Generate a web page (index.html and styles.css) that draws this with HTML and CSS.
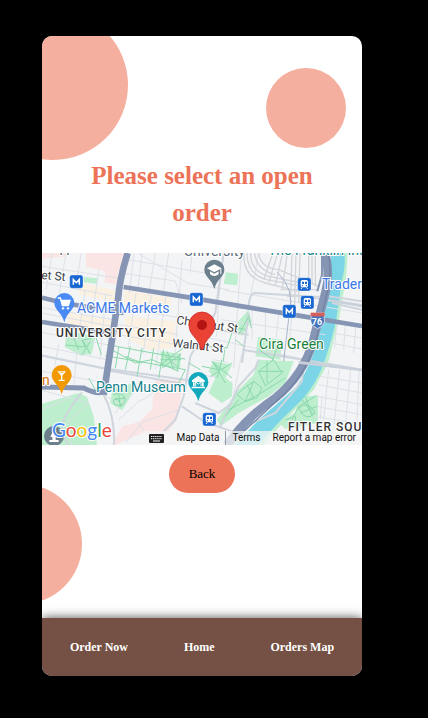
FILE: index.html
```html
<!DOCTYPE html>
<html lang="en">
<head>
<meta charset="utf-8">
<meta name="viewport" content="width=device-width, initial-scale=1">
<title>Select an open order</title>
<link rel="stylesheet" href="styles.css">
</head>
<body>
<div class="app">
  <span class="bubble bubble-large"></span>
  <span class="bubble bubble-small"></span>
  <span class="bubble bubble-low"></span>
  <main class="content">
    <h1 class="title">Please select an open order</h1>
    <section class="map" aria-label="Map">
      <svg class="map-canvas" viewBox="0 0 320 192" preserveAspectRatio="xMidYMid slice">
        <defs>
          <path id="pin" d="M0-30A30 30 0 0 0-30 0C-30 22-8 26 0 58C8 26 30 22 30 0A30 30 0 0 0 0-30Z"/>
          <g id="metro"><rect x="-20" y="-20" width="40" height="40" rx="7" fill="#1967d2" stroke="#fff" stroke-width="1"/><path d="M-9 9V-7L0 3L9-7V9" fill="none" stroke="#fff" stroke-width="4.5"/></g>
          <g id="train"><rect x="-20" y="-20" width="40" height="40" rx="7" fill="#1967d2" stroke="#fff" stroke-width="1"/><rect x="-11" y="-13" width="22" height="22" rx="5" fill="#fff"/><path d="M-7-8H-1V-1H-7ZM2-8H8V-1H2Z" fill="#1967d2"/><circle cx="-6" cy="4" r="2" fill="#1967d2"/><circle cx="6" cy="4" r="2" fill="#1967d2"/><path d="M-6 9L-10 14M6 9L10 14" stroke="#fff" stroke-width="3"/></g>
        </defs>
        <rect width="320" height="192" fill="#f3f4f6"/>
        <svg width="320" height="192" viewBox="0 0 960 576">
          <!-- land use -->
          <g fill="#fbe4e4">
            <path d="M132 0H250L228 60L224 95L188 88L190 55L132 42Z"/>
            <path d="M340 378L425 382L405 500L368 550L300 540L220 576H210L240 520L290 508L330 470Z"/>
            <path d="M0 0H70V10L0 18Z"/>
          </g>
          <g fill="#fbf1e2">
            <path d="M105 88L220 112L214 145L110 125ZM250 112L390 135L380 175L245 150ZM75 178L220 205L215 245L80 225ZM250 190L400 205L395 285L320 290L245 250Z"/>
          </g>
          <g fill="#bdeecd">
            <path d="M75 232L160 250L150 300L118 308L68 282ZM125 72L165 76V92L125 88ZM552 58L588 62L586 97L545 93Z"/>
            <path d="M0 452L110 420L135 432L155 490L165 576H0Z"/>
            <path d="M212 404L270 392L282 405L240 472L205 450ZM355 295L415 302V345L360 340ZM515 325L570 335L550 375L572 390L570 430L540 450L500 420L520 375L500 355Z"/>
            <path d="M648 320L755 325L730 390L680 430L590 480L535 520L525 500L590 410L635 365Z"/>
            <path d="M648 252L720 260L715 320L640 310ZM620 170L628 205L600 250L575 220Z"/>
            <path d="M775 432L828 426V510L730 527L712 510L760 478Z"/>
          </g>
          <!-- river and its bank -->
          <path d="M892 0H917L912 75L890 205L858 330L815 410L730 500L665 576H560L690 480L790 395L840 310L870 190Z" fill="#bdeecd"/>
          <path d="M868 0H906Q913 30 900 80L882 205Q865 280 840 344Q820 395 780 440L720 498L648 576H580L650 500L760 405Q815 330 834 230L860 130Z" fill="#7bd5e7"/>
          <!-- minor streets -->
          <g fill="none" stroke="#dde1e7" stroke-width="3">
            <path d="M0 40L228 75M0 88L210 128M0 164L215 200M0 180L208 220M0 238L200 276M0 280L195 320M0 305L188 345M0 355L184 388M30 0L12 110M72 0L52 120M118 0L102 95M130 110L112 230M170 52L148 214M192 120L174 320M50 275L38 340M105 290L95 405"/>
            <path d="M250 62L400 84L420 150M258 20L500 62M276 0L262 120M300 0L288 110M340 0L320 128M380 0L362 130M420 22L396 340M450 0L444 60M282 120L258 290M328 126L304 300M372 130L340 350M235 165L480 205M230 215L410 245M228 245L396 273M290 2L440 92L560 110"/>
            <path d="M545 0L530 140L524 250M598 0L575 345M650 0L620 160M548 112L960 180M538 200L850 245M480 250L800 322M630 172V260M670 180V260M710 185L702 255M750 188L742 260M512 320L560 328M470 365L520 372M600 300L570 450"/>
            <path d="M830 395L960 420M825 430L960 455M822 460L960 485M820 490L960 515M860 350L844 510M893 350L876 515M927 340L910 515M952 345L944 515M885 205L878 285M910 210L905 290M942 215L935 300M872 240L960 255M866 270L960 288M853 330L960 350M835 370L960 390M840 430L835 500"/>
            <path d="M220 480C250 430 285 404 330 403C350 402 330 430 290 445L230 500M250 570L300 508L410 470M285 505L330 568M0 412L140 450L70 515L90 576M0 470L90 430M230 455L180 420"/>
          </g>
          <g fill="none" stroke="#cfd5dd" stroke-width="6">
            <path d="M0 308L180 345L460 385M196 352L420 392M545 0L520 180L445 310L425 430L400 500L340 560M80 576C40 520 70 480 120 418M185 425Q220 490 216 576M420 460L490 508L600 545M460 450L530 480L570 450M535 520L590 400L640 345L650 320M560 540L700 480L780 385L785 330M600 290L820 326L960 350M870 150L960 170M860 130L960 145M525 230L620 245"/>
            <path d="M620 170Q620 120 640 120L790 130L960 160M620 180L600 330"/>
          </g>
          <!-- rail yard -->
          <g fill="none" stroke="#d2d5da" stroke-width="4">
            <path d="M606 0Q600 70 670 90L770 115M615 0Q615 65 675 80L780 100M626 0Q625 55 680 70L780 90M638 0Q642 50 700 65M650 0Q655 45 710 50L830 100M690 8L665 80M705 8L680 88M720 8L700 98M735 8L720 110M750 0L744 190M762 0L757 190M774 0L770 150M800 0V80M810 0V90M820 0V100M715 110H830M735 130H850"/>
          </g>
          <path d="M706 58Q760 110 742 180L725 325" fill="none" stroke="#a8b5ca" stroke-width="3"/>
          <!-- park paths -->
          <g fill="none" stroke="#8bd8ad" stroke-width="3">
            <path d="M72 276L130 282L120 262L148 256M125 265L145 305M145 265L120 305M95 255L110 290M155 230L178 305M195 275L430 318M190 308L430 350M230 282L220 345M265 280L250 350M300 285L285 370M335 285L325 350M365 290L350 375M415 300L405 355M200 285L280 330L330 320L410 355M350 340L430 280M300 330L250 310M360 300L410 345M360 345L415 305M375 295L395 350M355 320H418M480 340L530 350L510 325L570 375M512 325L550 390M570 330L505 370M540 320L525 375M490 280L555 285L570 240M548 290L544 325M440 330L475 350M430 350L410 390"/>
            <path d="M590 245L620 190L628 225M575 220L610 230M580 260L605 280M650 290L695 320L650 355L670 398L720 360L695 320M675 325V390M650 355H725M600 410L635 385L660 405L645 435L610 445L585 425ZM615 395L635 435M635 385L610 445M560 470L640 430L730 375M550 490L590 440M710 270L690 325M750 500L770 460L820 430M780 440L815 485M775 480L825 460M790 430L810 490M730 500L760 490V525M770 465Q800 440 820 480Q790 510 770 465Z"/>
            <path d="M215 425Q245 415 250 440Q245 465 218 455Q208 440 225 435L240 460M230 425L235 462M218 440L250 435M140 375L160 410"/>
          </g>
          <!-- main roads -->
          <g fill="none" stroke="#8595b3">
            <path d="M257 0Q232 80 228 140L185 425" stroke-width="20"/>
            <path d="M0 134L65 150L245 180M0 207L210 240M245 102L440 133L600 160L770 188L960 219" stroke-width="14"/>
            <path d="M0 402L125 405Q160 423 182 418" stroke-width="15"/>
            <path d="M850 0Q865 65 850 120L813 265Q785 365 700 435Q625 485 575 550L555 576" stroke-width="26"/>
            <path d="M840 0V65L826 115" stroke-width="6"/>
          </g>
          <path d="M859 0Q871 65 855 120L821 265Q791 370 706 442L590 550" fill="none" stroke="#7183a7" stroke-width="4"/>
          <path d="M770 328L960 351M865 142L960 158" fill="none" stroke="#c9d0da" stroke-width="8"/>
          <!-- transit and places -->
          <use href="#metro" x="103" y="86"/><use href="#metro" x="463" y="139"/><use href="#metro" x="742" y="175"/>
          <use href="#train" x="787" y="94"/><use href="#train" x="796" y="148"/><use href="#train" x="502" y="499"/>
          <path d="M806 180H848L846 193Q854 215 827 227Q800 215 808 193Z" fill="#4775bd" stroke="#fff" stroke-width="2"/><path d="M806 179H848V190H806Z" fill="#d65d59"/>
          <use href="#pin" x="67" y="150" fill="#4a8af4"/>
          <path d="M47 135H55L61 158H79L84 142H58" fill="none" stroke="#fff" stroke-width="4"/><path d="M58 142H84L79 156H61Z" fill="#fff"/><circle cx="63" cy="166" r="3.5" fill="#fff"/><circle cx="78" cy="166" r="3.5" fill="#fff"/>
          <use href="#pin" x="59" y="366" fill="#f29900"/>
          <path d="M46 355H72L61 368V380H68V384H50V380H57V368Z" fill="#fff"/><path d="M53 359H65" stroke="#f29900" stroke-width="2"/>
          <use href="#pin" x="517" y="50" fill="#6b7f8c"/>
          <path d="M495 46L517 34L539 46L517 58Z" fill="#fff"/><path d="M504 55V64Q517 74 530 64V55L517 62ZM535 47H538V63H535Z" fill="#fff"/>
          <use href="#pin" x="469" y="387" fill="#12a9bd"/>
          <path d="M450 382L469 368L488 382V387H450ZM453 388H458V400H453ZM480 388H485V400H480ZM449 401H489V406H449Z" fill="#fff"/><path d="M461 400V386L469 394L477 386V400" fill="none" stroke="#fff" stroke-width="3"/>
          <circle cx="36" cy="549" r="30" fill="#6b7f8c"/><path d="M36 527L25 552H31V561H22V567H50V561H41V552H47Z" fill="#fff"/>
        </svg>
        <g class="label">
          <text x="10" y="-1" class="street">Apple</text>
          <text x="-1" y="26" class="street" transform="rotate(5 0 26)">et St</text>
          <text x="134" y="71" class="street" transform="rotate(8 134 71)">Chestnut St</text>
          <text x="130" y="94" class="street" transform="rotate(6 130 94)">Walnut St</text>
          <text x="35" y="60" class="shop">ACME Markets</text>
          <text x="280" y="36" class="shop">Trader Joe's</text>
          <text x="217" y="96" class="park">Cira Green</text>
          <text x="54" y="139" class="museum">Penn Museum</text>
          <text x="226" y="2" class="museum">The Franklin Institute</text>
          <text x="142" y="3" class="school">University</text>
          <text x="0" y="132" class="food">n</text>
          <text x="14" y="84" class="district">UNIVERSITY CITY</text>
          <text x="246" y="178" class="district">FITLER SQUARE</text>
          <text x="275" y="72" text-anchor="middle" class="route">76</text>
        </g>
        <text x="10" y="184" class="brand"><tspan fill="#4285f4">G</tspan><tspan fill="#ea4335">o</tspan><tspan fill="#fbbc05">o</tspan><tspan fill="#4285f4">g</tspan><tspan fill="#34a853">l</tspan><tspan fill="#ea4335">e</tspan></text>
        <svg width="320" height="192" viewBox="0 0 960 576">
          <path d="M480 177A39 39 0 0 0 441 216C441 247 466 252 475 282Q476 290 480 290Q484 290 485 282C494 252 519 247 519 216A39 39 0 0 0 480 177Z" fill="#ea4335" stroke="#c5221f" stroke-width="2"/><circle cx="480" cy="216" r="15" fill="#b31412"/>
        </svg>
      </svg>
      <div class="map-bar">
        <button class="map-tool" type="button" aria-label="Keyboard shortcuts">
          <svg class="keyboard" viewBox="0 0 15 10"><rect width="15" height="9" y="1" rx="1" fill="#222"/><path d="M2 3.5H13M2 5.7H13" stroke="#fff" stroke-width="1" stroke-dasharray="1.3 .8"/><path d="M4 8H11" stroke="#fff" stroke-width="1"/></svg>
        </button>
        <button class="map-tool" type="button">Map Data</button>
        <a class="map-tool map-terms" href="#terms">Terms</a>
        <a class="map-tool" href="#report">Report a map error</a>
      </div>
    </section>
    <button class="back" type="button">Back</button>
  </main>
  <nav class="nav">
    <a href="#order">Order Now</a>
    <a href="#home">Home</a>
    <a href="#map">Orders Map</a>
  </nav>
</div>
</body>
</html>
```
FILE: styles.css
```css
* {
  box-sizing: border-box;
}

body {
  margin: 0;
  padding: 36px 66px 42px 42px;
  min-height: 100vh;
  display: flex;
  background: #000;
  font-family: "Liberation Serif", serif;
}

.app {
  position: relative;
  flex: 1;
  min-width: 0;
  display: flex;
  flex-direction: column;
  overflow: hidden;
  border-radius: 10px;
  background: #fff;
}

.bubble {
  position: absolute;
  border-radius: 50%;
  background: #f5af9f;
}

.bubble-large {
  top: -26px;
  left: -64px;
  width: 150px;
  height: 150px;
}

.bubble-small {
  top: 32px;
  right: 16px;
  width: 80px;
  height: 80px;
}

.bubble-low {
  bottom: 72px;
  left: -80px;
  width: 120px;
  height: 120px;
}

.content {
  position: relative;
  flex: 1;
  display: flex;
  flex-direction: column;
  align-items: center;
  padding-top: 121px;
}

.title {
  margin: 0 0 22px;
  padding: 0 40px;
  color: #ec7357;
  font-size: 25px;
  line-height: 37px;
  text-align: center;
}

.map {
  position: relative;
  width: 100%;
  height: 192px;
  overflow: hidden;
}

.map-canvas {
  display: block;
  width: 100%;
  height: 100%;
}

.label {
  font-family: Roboto, sans-serif;
  font-size: 14px;
  stroke: #fff;
  stroke-width: 2px;
  stroke-linejoin: round;
  paint-order: stroke;
}

.street {
  font-size: 12px;
  fill: #3c4043;
}

.shop {
  fill: #3b78e7;
}

.park {
  fill: #188038;
}

.museum {
  fill: #12828c;
}

.school {
  fill: #5b6c78;
}

.food {
  fill: #d56e0c;
}

.district {
  font-size: 12px;
  font-weight: 500;
  letter-spacing: 1px;
  fill: #333;
}

.route {
  font-size: 9px;
  font-weight: 700;
  fill: #fff;
  stroke: none;
}

.brand {
  font-family: Lato, sans-serif;
  font-size: 19px;
  font-weight: 400;
  stroke: #fff;
  stroke-width: 2px;
  paint-order: stroke;
}

.map-bar {
  position: absolute;
  right: 0;
  bottom: 0;
  display: flex;
  align-items: center;
  height: 14px;
  background: rgba(245, 245, 245, 0.75);
}

.map-tool {
  padding: 0 6px;
  border: 0;
  background: none;
  color: #111;
  font: 10px/14px Roboto, sans-serif;
  text-decoration: none;
}

.map-terms {
  border-left: 1px solid #8d99ab;
}

.keyboard {
  display: block;
  width: 15px;
  height: 10px;
}

.back {
  margin-top: 10px;
  height: 38px;
  padding: 0 20px;
  border: 0;
  border-radius: 19px;
  background: #ec7357;
  color: #000;
  font: 13px/18px "Liberation Serif", serif;
}

.nav {
  position: relative;
  display: flex;
  justify-content: space-around;
  align-items: center;
  height: 58px;
  background: #755044;
  box-shadow: 0 0 10px rgba(0, 0, 0, 0.7);
}

.nav a {
  color: #fff;
  font-size: 12px;
  font-weight: 700;
  line-height: 18px;
  text-decoration: none;
}
```
